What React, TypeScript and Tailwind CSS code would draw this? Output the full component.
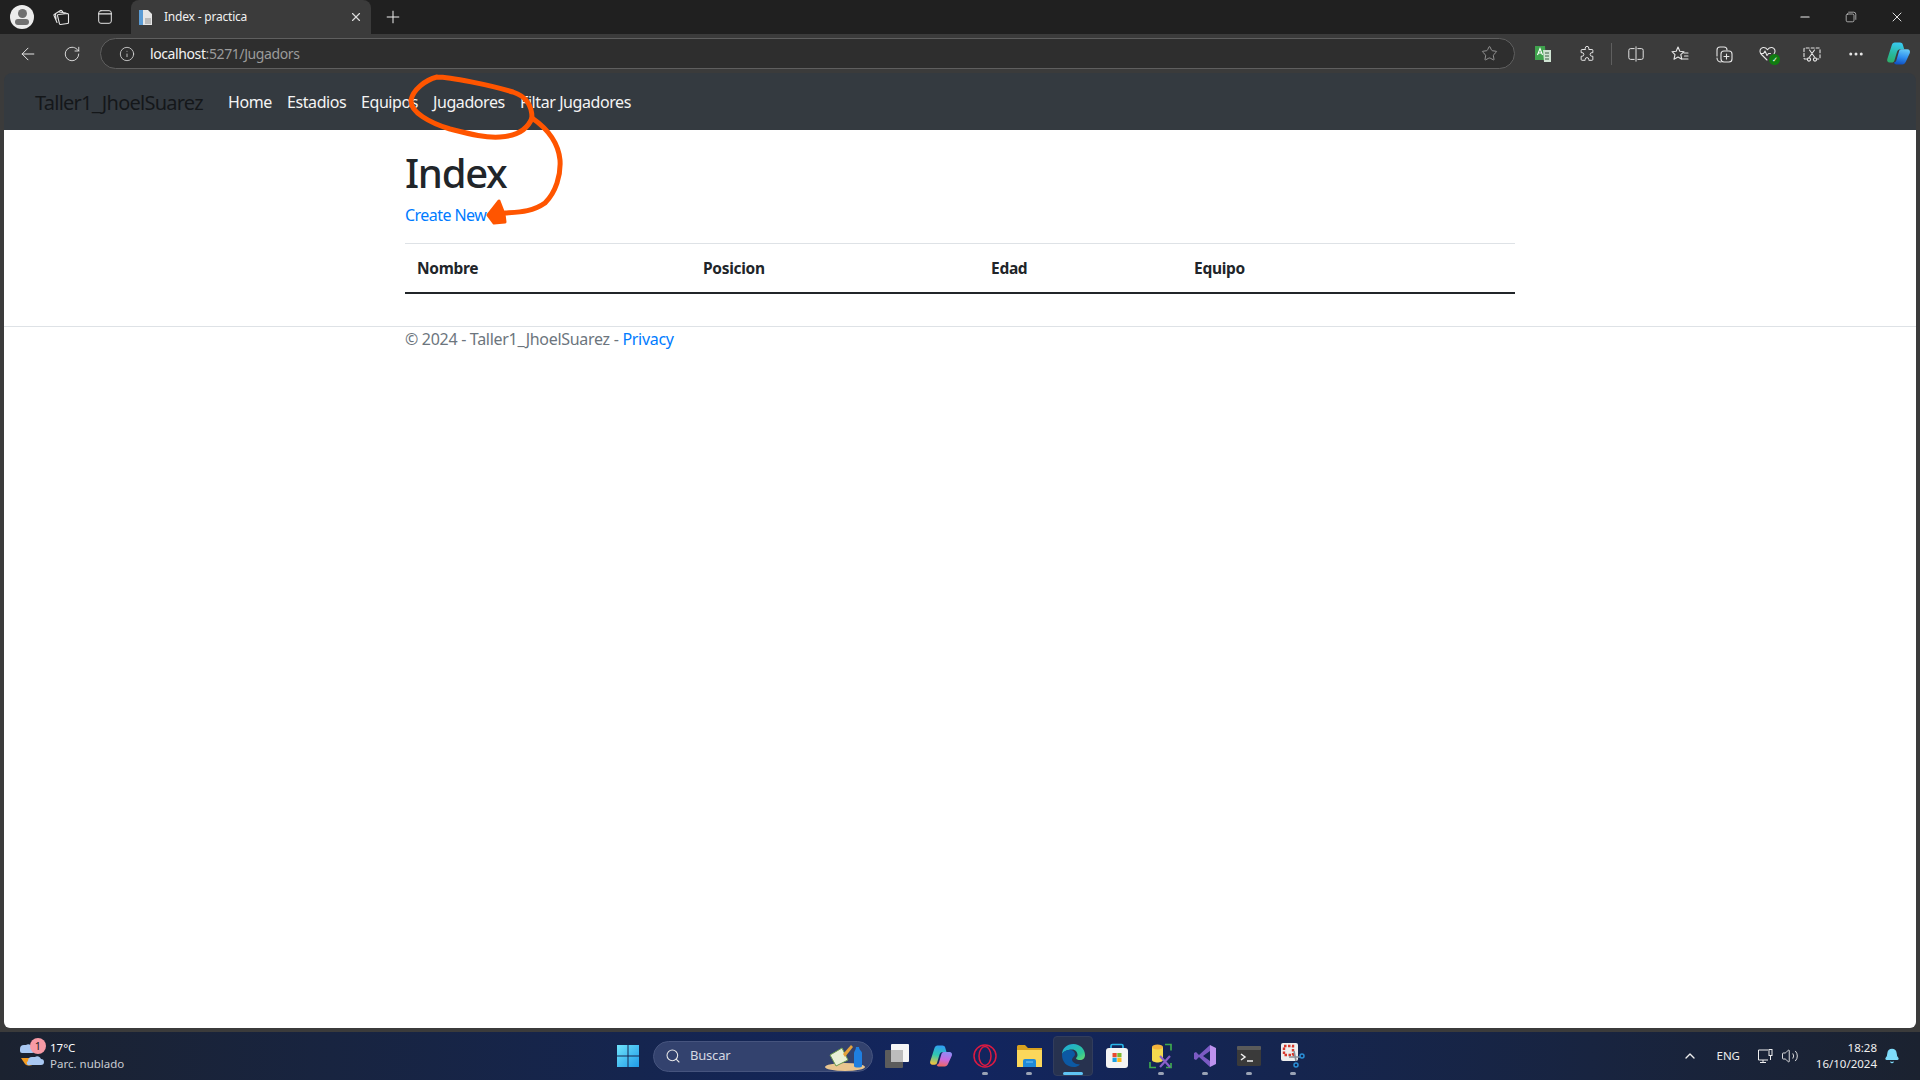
import { ArrowLeft, Bell, ChevronUp, EllipsisIcon, Info, Minus, Plus, RotateCw, Search, Star, Volume2, X } from 'lucide-react';
import type { ReactNode } from 'react';

const FONT = 'font-["Noto_Sans","Open_Sans",sans-serif]';

function Slot({ children, w = 'w-[44px]' }: { children: ReactNode; w?: string }) {
  return <span className={`${w} h-full flex items-center justify-center relative shrink-0`}>{children}</span>;
}

function Outline({ size = 20, children }: { size?: number; children: ReactNode }) {
  return (
    <svg width={size} height={size} viewBox="0 0 20 20" fill="none" stroke="#e6e6e6" strokeWidth="1.1" strokeLinejoin="round" strokeLinecap="round">
      {children}
    </svg>
  );
}

function Dot() {
  return <span className="absolute bottom-[5px] w-[6px] h-[3px] rounded-full bg-[#9aa3b5]" />;
}

function TabStrip() {
  return (
    <div className="h-[34px] bg-[#202020] flex items-center shrink-0">
      <span className="w-[44px] flex justify-center">
        <span className="w-6 h-6 rounded-full bg-[#ececec] flex flex-col items-center justify-center">
          <span className="w-[9px] h-[9px] rounded-full bg-[#707070]" />
          <span className="w-[14px] h-[6px] mt-[1px] rounded-[3px] bg-[#707070]" />
        </span>
      </span>
      <Slot w="w-[34px]">
        <Outline size={20}>
          <path d="M7.500 7.500 16.500 6.500a1 1 0 0 1 1 1v8a1 1 0 0 1-1 1l-7 1a1 1 0 0 1-1-.7L6.500 8.700a1 1 0 0 1 1-1.200z" />
          <path d="M6 15.500 3 8.500a1 1 0 0 1 .5-1.300L9.500 3.500a1 1 0 0 1 1.200.2L13 6.500M5 12 4.500 7M8 5l7 1" />
        </Outline>
      </Slot>
      <Slot w="w-[53px]">
        <Outline size={18}>
          <rect x="3" y="3" width="14" height="14" rx="2.500" />
          <path d="M3 6.500h14" strokeWidth="1.600" />
        </Outline>
      </Slot>
      <div className="w-[240px] h-full bg-[#3b3b3b] rounded-t-lg flex items-center pl-[7px] pr-[8px]">
        <svg width="16" height="17" viewBox="0 0 16 17">
          <path d="M1 1h9l4 4v11H1z" fill="#e6e6e6" />
          <path d="M1 1h4v15H1z" fill="#5a9bd4" />
          <path d="M7 9h6v6H7z" fill="#bbb" />
        </svg>
        <span className={`${FONT} ml-[10px] text-[12px] tracking-[-0.2px] text-[#f0f0f0] flex-1`}>Index - practica</span>
        <X size={14} color="#dcdcdc" />
      </div>
      <span className="ml-[12px]">
        <Plus size={20} color="#f0f0f0" strokeWidth={1.2} />
      </span>
      <div className="flex-1" />
      <Slot w="w-[46px]"><Minus size={14} color="#eee" /></Slot>
      <Slot w="w-[46px]">
        <Outline size={12}>
          <rect x="2" y="5" width="13" height="13" rx="2.500" />
          <path d="M6 2h8.500A3.500 3.500 0 0 1 18 5.500V14" />
        </Outline>
      </Slot>
      <Slot w="w-[46px]"><X size={16} color="#eee" strokeWidth={1.4} /></Slot>
    </div>
  );
}

function Toolbar() {
  return (
    <div className="h-[39px] bg-[#3b3b3b] flex items-center shrink-0">
      <Slot w="w-[56px]"><ArrowLeft size={20} color="#e6e6e6" strokeWidth={1.2} /></Slot>
      <Slot w="w-[32px]"><RotateCw size={18} color="#e6e6e6" strokeWidth={1.2} /></Slot>
      <div className="ml-[12px] w-[1415px] h-[31px] rounded-full border border-[#5f5f5f] bg-[#2e2e2e] flex items-center pl-[18px] pr-[16px]">
        <Info size={16} color="#e0e0e0" strokeWidth={1.200} />
        <span className={`${FONT} ml-[15px] text-[14px] tracking-[-0.4px] flex-1`}>
          <span className="text-[#f2f2f2]">localhost</span>
          <span className="text-[#9b9b9b]">:5271/Jugadors</span>
        </span>
        <Star size={17} color="#9a9a9a" strokeWidth={1.3} />
      </div>
      <span className="w-[6px]" />
      <Slot>
        <svg width="18" height="18" viewBox="0 0 18 18">
          <path d="M1 1h10l1 14H1z" fill="#3fa34d" />
          <path d="M9 5h8v12H10z" fill="#cfe3d2" />
          <path d="M11 8h4M11 11h4M11 14h4" stroke="#3a5f42" />
          <path d="M3.500 10 6 3.500 8.500 10M4.500 8h3" stroke="#fff" strokeWidth="1.100" fill="none" />
        </svg>
      </Slot>
      <Slot>
        <Outline size={18}>
          <path d="M8 3.500a2 2 0 0 1 4 0V5h3.500a1 1 0 0 1 1 1v2.500h-1a2 2 0 0 0 0 4h1V16a1 1 0 0 1-1 1H12v-1a2 2 0 0 0-4 0v1H4.500a1 1 0 0 1-1-1v-3.500h1a2 2 0 0 0 0-4h-1V6a1 1 0 0 1 1-1H8z" />
        </Outline>
      </Slot>
      <span className="w-[5px] h-[22px] flex justify-center"><span className="w-px h-full bg-[#5f5f5f]" /></span>
      <Slot>
        <Outline size={18}>
          <path d="M8 4H4a2 2 0 0 0-2 2v8a2 2 0 0 0 2 2h4M12 4h4a2 2 0 0 1 2 2v8a2 2 0 0 1-2 2h-4M10 2v16" />
        </Outline>
      </Slot>
      <Slot>
        <Outline size={20}>
          <path d="m8 3 1.800 4.300 4.200.4-3.200 3 1 4.500L8 13l-4 2.200 1-4.500-3-3 4.200-.4zM14 9h4M14.500 12H18M12.500 15H18" />
        </Outline>
      </Slot>
      <Slot>
        <Outline size={20}>
          <path d="M3 12V6a3 3 0 0 1 3-3h4a3 3 0 0 1 3 3M7 18a4 4 0 0 1-4-4" />
          <rect x="7" y="7" width="11" height="11" rx="3" />
          <path d="M12.500 10v5M10 12.500h5" />
        </Outline>
      </Slot>
      <Slot>
        <Outline size={20}>
          <path d="M9 16 3 10c-2-2.500-1-6 2-6.500 2-.3 3.500.8 4.500 2.200C10.500 4.300 12 3.200 14 3.500c3 .5 4 4 2 6.500M2.500 9.500h3l1.500-2.500 2 4.500 1.500-2h2" />
        </Outline>
        <span className="absolute left-[23px] top-[20px] w-[11px] h-[11px] rounded-full bg-[#107c10] flex items-center justify-center text-[7px] text-white leading-none">✓</span>
      </Slot>
      <Slot>
        <Outline size={20}>
          <path d="M5 15H3a1 1 0 0 1-1-1V5a1 1 0 0 1 1-1h14a1 1 0 0 1 1 1v9a1 1 0 0 1-1 1h-2" strokeDasharray="3 2" />
          <path d="m7.500 6 5 7M12.500 6l-5 7" />
          <circle cx="7" cy="15.500" r="1.600" />
          <circle cx="13" cy="15.500" r="1.600" />
        </Outline>
      </Slot>
      <Slot><EllipsisIcon size={18} color="#e6e6e6" /></Slot>
      <Slot w="w-[40px]">
        <svg width="25" height="25" viewBox="0 0 24 24">
          <defs>
            <linearGradient id="cop1" x1="0.500" y1="0" x2="0.300" y2="1"><stop offset="0" stopColor="#38c8ee" /><stop offset="0.600" stopColor="#28b89a" /><stop offset="1" stopColor="#2fae6a" /></linearGradient>
            <linearGradient id="cop2" x1="0.500" y1="0" x2="0.300" y2="1"><stop offset="0" stopColor="#62c6f7" /><stop offset="0.500" stopColor="#2f8ff0" /><stop offset="1" stopColor="#0f4fc0" /></linearGradient>
          </defs>
          <path d="M8.500 1.500h5c1.300 0 2.200.7 2.600 1.800l1.400 4.700H14c-2 0-3 1-3.600 3L8 19c-.3 1-1.200 1.700-2.300 1.700H3.500c-1.800 0-2.800-1.500-2.300-3.200L5.500 4c.5-1.500 1.500-2.500 3-2.500z" fill="url(#cop1)" />
          <path d="M14.500 8h6c1.800 0 3 1.500 2.400 3.500L19 20c-.6 1.500-1.800 2.500-3.300 2.500H10c-1.300 0-2.100-.8-2.400-1.800C9 20.500 9.700 19.500 10 18.500l2.300-8C12.700 9 13.500 8 14.500 8z" fill="url(#cop2)" />
        </svg>
      </Slot>
    </div>
  );
}

function Navbar() {
  return (
    <nav className={`${FONT} h-[57px] rounded-tl-lg rounded-tr-lg bg-[#343a40] flex items-center pl-[31px] shrink-0`}>
      <span className="w-[193px] pt-[2px] text-[20px] tracking-[-0.75px] text-[#14171a]">Taller1_JhoelSuarez</span>
      <div className="flex text-[16px] tracking-[-0.42px] text-[#f4f4f4]">
        <span className="w-[59px]">Home</span>
        <span className="w-[74px]">Estadios</span>
        <span className="w-[72px]">Equipos</span>
        <span className="w-[87px]">Jugadores</span>
        <span>Filtar Jugadores</span>
      </div>
    </nav>
  );
}

function Page() {
  return (
    <main className={`${FONT} flex-1 bg-white text-[#212529] text-[16px] flex flex-col`}>
      <div className="w-[1110px] ml-[401px] pt-[19px]">
        <h1 className="text-[40px] leading-[48px] font-medium tracking-[-1.300px]">Index</h1>
        <p className="mt-[6px] leading-[24px] tracking-[-0.55px] text-[#007bff]">Create New</p>
        <div className="mt-[16px] h-[51px] pt-[2px] border-t border-[#dee2e6] border-b-2 border-b-[#212529] grid grid-cols-[286px_288px_203px_1fr] items-center pl-[12px] font-bold tracking-[-0.3px] text-[15.5px]">
          <span>Nombre</span>
          <span>Posicion</span>
          <span>Edad</span>
          <span>Equipo</span>
        </div>
      </div>
      <footer className="mt-[32px] border-t border-[#dee2e6]">
        <p className="ml-[401px] leading-[24px] tracking-[-0.3px] text-[#6c757d]">
          © 2024 - Taller1_JhoelSuarez - <span className="text-[#007bff]">Privacy</span>
        </p>
      </footer>
    </main>
  );
}

function Taskbar() {
  return (
    <div className={`${FONT} h-[48px] bg-gradient-to-r from-[#1b2230] via-[#12255f] to-[#1b2230] flex items-center shrink-0`}>
      <div className="w-[606px] h-full flex items-center pl-[18px]">
        <span className="relative w-[28px] h-[32px]">
          <svg width="28" height="30" viewBox="0 0 28 30">
            <path d="M2 9a4 4 0 0 1 4-4h2a4 4 0 0 1 6 2 3 3 0 0 1 0 6H4a2 2 0 0 1-2-2z" fill="#a9c8f2" />
            <path d="M3 18h15l-2 6c-3 2-7 2-9 0z" fill="#f39a1e" />
            <path d="M10 21a4 4 0 0 1 4-4h3a4 4 0 0 1 6 2 3 3 0 0 1 0 6H12a2 2 0 0 1-2-4z" fill="#a9c8f2" />
          </svg>
          <span className="absolute left-[12px] top-[-2px] w-[16px] h-[16px] rounded-full bg-[#f79aa5] text-[11px] leading-[16px] text-center text-[#222]">1</span>
        </span>
        <div className="ml-[4px] flex flex-col text-[11.5px] leading-[16px]">
          <span className="text-white">17°C</span>
          <span className="text-[#c9ccd2]">Parc. nublado</span>
        </div>
      </div>
      <Slot>
        <svg width="24" height="24" viewBox="0 0 24 24">
          <defs>
            <linearGradient id="win" x1="0" y1="0" x2="1" y2="1"><stop offset="0" stopColor="#6fe3fb" /><stop offset="1" stopColor="#1f9be8" /></linearGradient>
          </defs>
          <path d="M1 1h10.500v10.500H1zM12.500 1H23v10.500H12.500zM1 12.500h10.500V23H1zM12.500 12.500H23V23H12.500z" fill="url(#win)" />
        </svg>
      </Slot>
      <div className="w-[220px] h-[31px] rounded-full bg-[#33426e] border border-[#46547e] flex items-center pl-[11px] ml-[3px] mr-[2px] relative">
        <Search size={16} color="#e8e8e8" strokeWidth={1.6} />
        <span className="ml-[9px] text-[13px] text-[#d5d8e2] tracking-[-0.2px]">Buscar</span>
        <svg width="44" height="30" viewBox="0 0 44 30" className="absolute right-[3px] top-0">
          <ellipse cx="20" cy="25" rx="20" ry="4" fill="#e9c58f" />
          <path d="M5 13 17 6l6 12-12 6z" fill="#e9f0d6" stroke="#6d9a4f" />
          <path d="m18 12 8-9 2 2-8 10z" fill="#e6a23c" />
          <path d="M29 11c0-2 2-3 2-6h3c0 3 3 4 3 6v13c0 2-8 2-8 0z" fill="#1f7fe0" />
        </svg>
      </div>
      <Slot>
        <svg width="24" height="24" viewBox="0 0 24 24">
          <rect x="0" y="6" width="18" height="18" rx="1" fill="#5c5c5c" />
          <rect x="6" y="0" width="18" height="18" rx="1" fill="#f6f6f6" />
          <rect x="6" y="6" width="12" height="12" fill="#bcbcbc" />
        </svg>
      </Slot>
      <Slot>
        <svg width="24" height="24" viewBox="0 0 24 24">
          <defs>
            <linearGradient id="cop3" x1="0.500" y1="0" x2="0.300" y2="1"><stop offset="0" stopColor="#2f9ff0" /><stop offset="0.500" stopColor="#30c8b0" /><stop offset="1" stopColor="#f5c33c" /></linearGradient>
            <linearGradient id="cop4" x1="0.500" y1="0" x2="0.300" y2="1"><stop offset="0" stopColor="#8f8cf5" /><stop offset="0.500" stopColor="#c76ae0" /><stop offset="1" stopColor="#f0685a" /></linearGradient>
          </defs>
          <path d="M8.500 1.500h5c1.300 0 2.200.7 2.600 1.800l1.400 4.700H14c-2 0-3 1-3.600 3L8 19c-.3 1-1.200 1.700-2.300 1.700H3.500c-1.800 0-2.800-1.500-2.300-3.200L5.500 4c.5-1.500 1.500-2.500 3-2.500z" fill="url(#cop3)" />
          <path d="M14.500 8h6c1.800 0 3 1.500 2.400 3.500L19 20c-.6 1.500-1.800 2.500-3.300 2.500H10c-1.300 0-2.100-.8-2.400-1.800C9 20.500 9.700 19.500 10 18.500l2.300-8C12.700 9 13.500 8 14.500 8z" fill="url(#cop4)" />
        </svg>
      </Slot>
      <Slot>
        <svg width="24" height="24" viewBox="0 0 24 24" fill="none" stroke="#dc1a42" strokeWidth="1.500">
          <circle cx="12" cy="12" r="11" />
          <ellipse cx="12" cy="12" rx="6" ry="9.500" />
        </svg>
        <Dot />
      </Slot>
      <Slot>
        <svg width="25" height="22" viewBox="0 0 25 22">
          <path d="M0 1.500A1.500 1.500 0 0 1 1.500 0H8l3 3h14v19H0z" fill="#d9a21f" />
          <path d="M0 5h25v17H0z" fill="#fbd75b" />
          <path d="M6 16a2 2 0 0 1 2-2h9a2 2 0 0 1 2 2v6H6z" fill="#1f8ad8" />
          <path d="M9 17h7" stroke="#7cc7f2" />
        </svg>
        <Dot />
      </Slot>
      <Slot>
        <span className="absolute inset-x-[2px] inset-y-[4px] rounded-[4px] bg-[#27324f] border border-[#323d5c]" />
        <svg width="24" height="25" viewBox="0 0 24 25" className="relative -mt-[1px]">
          <defs>
            <linearGradient id="edge" x1="0" y1="0" x2="1" y2="1"><stop offset="0" stopColor="#1ea8e0" /><stop offset="0.700" stopColor="#2cc59a" /><stop offset="1" stopColor="#6fdc6a" /></linearGradient>
          </defs>
          <path d="M1 12C1 5 6 1 12.500 1 19 1 24 6 24 12c0 3-2 5-5 5-2 0-4-.6-4-2 .8-.7 1.500-1.600 1.500-3 0-3-2-5.500-5.500-5.500C6 6.500 1 9 1 12z" fill="url(#edge)" />
          <path d="M1 12c0-3 4-5 8-5 3 0 5 2 5 4.500 0 2-3 3-3 5s3 5 8 5c-2 2-4 2.500-6.500 2.500C6 24 1 19 1 12z" fill="#0c59a4" />
        </svg>
        <span className="absolute bottom-[5px] w-[20px] h-[3px] rounded-full bg-[#5fc4f5]" />
      </Slot>
      <Slot>
        <svg width="24" height="26" viewBox="0 0 24 26">
          <path d="M6 7V3a1.500 1.500 0 0 1 1.500-1.500h9A1.500 1.500 0 0 1 18 3v4" fill="none" stroke="#29b6e8" strokeWidth="1.700" />
          <rect x="1" y="5" width="22" height="20" rx="3" fill="#f4f4f4" />
          <path d="M7.500 10h4.200v4.200H7.500z" fill="#e8492f" />
          <path d="M12.300 10h4.200v4.200h-4.200z" fill="#7cb82f" />
          <path d="M7.500 14.800h4.200V19H7.500z" fill="#1ba1e2" />
          <path d="M12.300 14.800h4.200V19h-4.200z" fill="#f9b81e" />
        </svg>
      </Slot>
      <Slot>
        <svg width="24" height="26" viewBox="0 0 24 26">
          <path d="M3 4v13c0 1.500 3 2.500 5.500 2.500S14 18.500 14 17V4z" fill="#f3d94e" />
          <ellipse cx="8.500" cy="4" rx="5.500" ry="2.500" fill="#f3b33c" />
          <path d="M16 1.500h6v6M1 19v5.500h6M17 24.500h5V20" fill="none" stroke="#3eaa4e" strokeWidth="1.700" />
          <path d="m11 13 10 11M21 13 11 24" stroke="#8a5fc9" strokeWidth="2.200" />
        </svg>
        <Dot />
      </Slot>
      <Slot>
        <svg width="24" height="24" viewBox="0 0 24 24">
          <path d="M17 1 23 4v16l-6 3z" fill="#bd92ee" />
          <path d="M17 1 6 11 3 8 1 9v6l2 1 3-3 11 10v-6l-7-5 7-5z" fill="#7c5bc4" />
        </svg>
        <Dot />
      </Slot>
      <Slot>
        <svg width="24" height="20" viewBox="0 0 24 20">
          <rect width="24" height="20" rx="1.500" fill="#3a3a3a" />
          <rect width="24" height="4" rx="1" fill="#5a5a5a" />
          <path d="m4 8 4 3-4 3M10 15h6" fill="none" stroke="#f0f0f0" strokeWidth="1.500" />
        </svg>
        <Dot />
      </Slot>
      <Slot>
        <svg width="26" height="26" viewBox="0 0 26 26">
          <rect x="1" y="0" width="17" height="18" rx="2" fill="#eeeeee" />
          <path d="M4 3h9v9H4z" fill="none" stroke="#d8382c" strokeWidth="2.400" strokeDasharray="2.500 1.500" />
          <path d="M9 14h11M14 8l2 10" stroke="#8a8f98" strokeWidth="1.600" />
          <circle cx="22" cy="13" r="2" fill="none" stroke="#2a8fd6" strokeWidth="1.500" />
          <circle cx="16" cy="22" r="2" fill="none" stroke="#2a8fd6" strokeWidth="1.500" />
        </svg>
        <Dot />
      </Slot>
      <div className="flex-1" />
      <ChevronUp size={16} color="#eee" strokeWidth={2} className="mr-[18px]" />
      <span className="text-[11.5px] text-[#eee] mr-[17px]">ENG</span>
      <svg width="16" height="16" viewBox="0 0 16 16" fill="none" stroke="#eee" className="mr-[8px]">
        <path d="M11 2H1.500v10h9.500M6 12v2M3 14.500h6" />
        <rect x="12" y="1.500" width="3" height="6" />
        <path d="M13.500 7.500V12" />
      </svg>
      <Volume2 size={18} color="#eee" strokeWidth={1.200} className="mr-[12px]" />
      <div className="w-[66px] flex flex-col items-end text-[11.5px] leading-[16px] text-[#f0f0f0]">
        <span>18:28</span>
        <span>16/10/2024</span>
      </div>
      <Bell size={16} color="#7fdcfa" fill="#7fdcfa" className="ml-[7px] mr-[20px]" />
    </div>
  );
}

export default function App() {
  return (
    <div className="relative h-screen w-full overflow-hidden flex flex-col bg-[#3b3b3b]">
      <TabStrip />
      <Toolbar />
      <div className="flex-1 flex flex-col mx-[4px] mb-[4px] min-h-0 rounded-b-md overflow-hidden">
        <Navbar />
        <Page />
      </div>
      <Taskbar />
      {/* hand-drawn annotation on top of the page */}
      <svg className="absolute inset-0 pointer-events-none" width="1920" height="1080" fill="none" stroke="#ff5500" strokeWidth="5" strokeLinecap="round" strokeLinejoin="round">
        <path d="M437 77C450 77 490 85 513 92 525 96 532 105 532 118 528 128 518 136 500 137 485 138 470 134 450 129 430 123 410 112 411 100 413 90 425 80 437 77" />
        <path d="M532 118C545 127 558 140 560 160 561 175 556 192 545 203 532 212 520 212 505 213" />
        <path d="M488 215 499 201 504 214 505 222 494 223Z" fill="#ff5500" strokeWidth="3" />
      </svg>
    </div>
  );
}
